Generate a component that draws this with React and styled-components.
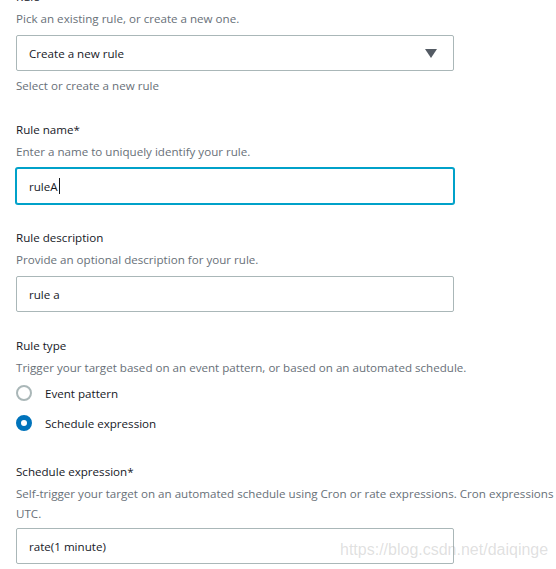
import React from "react";
import styled, { createGlobalStyle } from "styled-components";

const GlobalStyle = createGlobalStyle`
  html, body {
    margin: 0;
    padding: 0;
    background: #ffffff;
    overflow: hidden;
  }
  body {
    font-family: "Open Sans", "Liberation Sans", sans-serif;
    font-size: 11.6px;
    color: #16191f;
  }
`;

const Page = styled.div`
  position: relative;
  width: 556px;
  height: 569px;
  overflow: hidden;
`;

const Form = styled.div`
  display: flex;
  flex-direction: column;
  gap: 24px;
  margin-top: -13px;
  padding-left: 16px;
`;

const Field = styled.div`
  display: flex;
  flex-direction: column;
`;

const Label = styled.div`
  line-height: 20px;
  color: #16191f;
`;

const Description = styled.div`
  margin-top: 2px;
  margin-bottom: ${(p) => p.$gap ?? 6}px;
  line-height: 20px;
  color: #687078;
  white-space: nowrap;
`;

const Hint = styled.div`
  margin-top: 5px;
  line-height: 20px;
  color: #687078;
`;

const Box = styled.div`
  box-sizing: border-box;
  display: flex;
  align-items: center;
  width: 438px;
  height: 36px;
  padding: 0 12px;
  border: 1px solid ${(p) => (p.$focused ? "#00a1c9" : "#aab7b8")};
  box-shadow: ${(p) => (p.$focused ? "0 0 0 1px #00a1c9" : "none")};
  border-radius: 2px;
  background: #ffffff;
  color: #16191f;
`;

const SelectBox = styled(Box)`
  justify-content: space-between;
  padding-right: 16px;
`;

const Caret = styled.span`
  display: inline-block;
  width: 1px;
  height: 16px;
  margin-left: 1px;
  background: #16191f;
`;

const RadioGroup = styled.div`
  display: flex;
  flex-direction: column;
`;

const RadioRow = styled.div`
  display: flex;
  align-items: center;
  height: 30px;
  gap: 13px;
`;

const RadioDot = styled.span`
  box-sizing: border-box;
  width: 16px;
  height: 16px;
  border-radius: 50%;
  border: ${(p) => (p.$checked ? "5px solid #0073bb" : "2px solid #aab7b8")};
  background: #ffffff;
`;

const Watermark = styled.div`
  position: absolute;
  left: 340px;
  top: 541px;
  font-family: "Liberation Sans", Arial, sans-serif;
  font-size: 16px;
  color: rgba(150, 150, 150, 0.3);
  pointer-events: none;
`;

const Arrow = () => (
  <svg width="12" height="9" viewBox="0 0 12 9">
    <path d="M0 0 H12 L6 9 Z" fill="#545b64" />
  </svg>
);

export default function App() {
  return (
    <Page>
      <GlobalStyle />
      <Form>
        <Field>
          <Label>Rule</Label>
          <Description>Pick an existing rule, or create a new one.</Description>
          <SelectBox>
            <span>Create a new rule</span>
            <Arrow />
          </SelectBox>
          <Hint>Select or create a new rule</Hint>
        </Field>

        <Field>
          <Label>Rule name*</Label>
          <Description $gap={6}>Enter a name to uniquely identify your rule.</Description>
          <Box $focused>
            ruleA
            <Caret />
          </Box>
        </Field>

        <Field>
          <Label>Rule description</Label>
          <Description $gap={6}>Provide an optional description for your rule.</Description>
          <Box>rule a</Box>
        </Field>

        <Field>
          <Label>Rule type</Label>
          <Description $gap={0}>
            Trigger your target based on an event pattern, or based on an automated schedule.
          </Description>
          <RadioGroup>
            <RadioRow>
              <RadioDot />
              Event pattern
            </RadioRow>
            <RadioRow>
              <RadioDot $checked />
              Schedule expression
            </RadioRow>
          </RadioGroup>
        </Field>

        <Field>
          <Label>Schedule expression*</Label>
          <Description $gap={4}>
            Self-trigger your target on an automated schedule using Cron or rate expressions. Cron expressions
            <br />
            UTC.
          </Description>
          <Box>rate(1 minute)</Box>
        </Field>
      </Form>
      <Watermark>https://blog.csdn.net/daiqinge</Watermark>
    </Page>
  );
}
